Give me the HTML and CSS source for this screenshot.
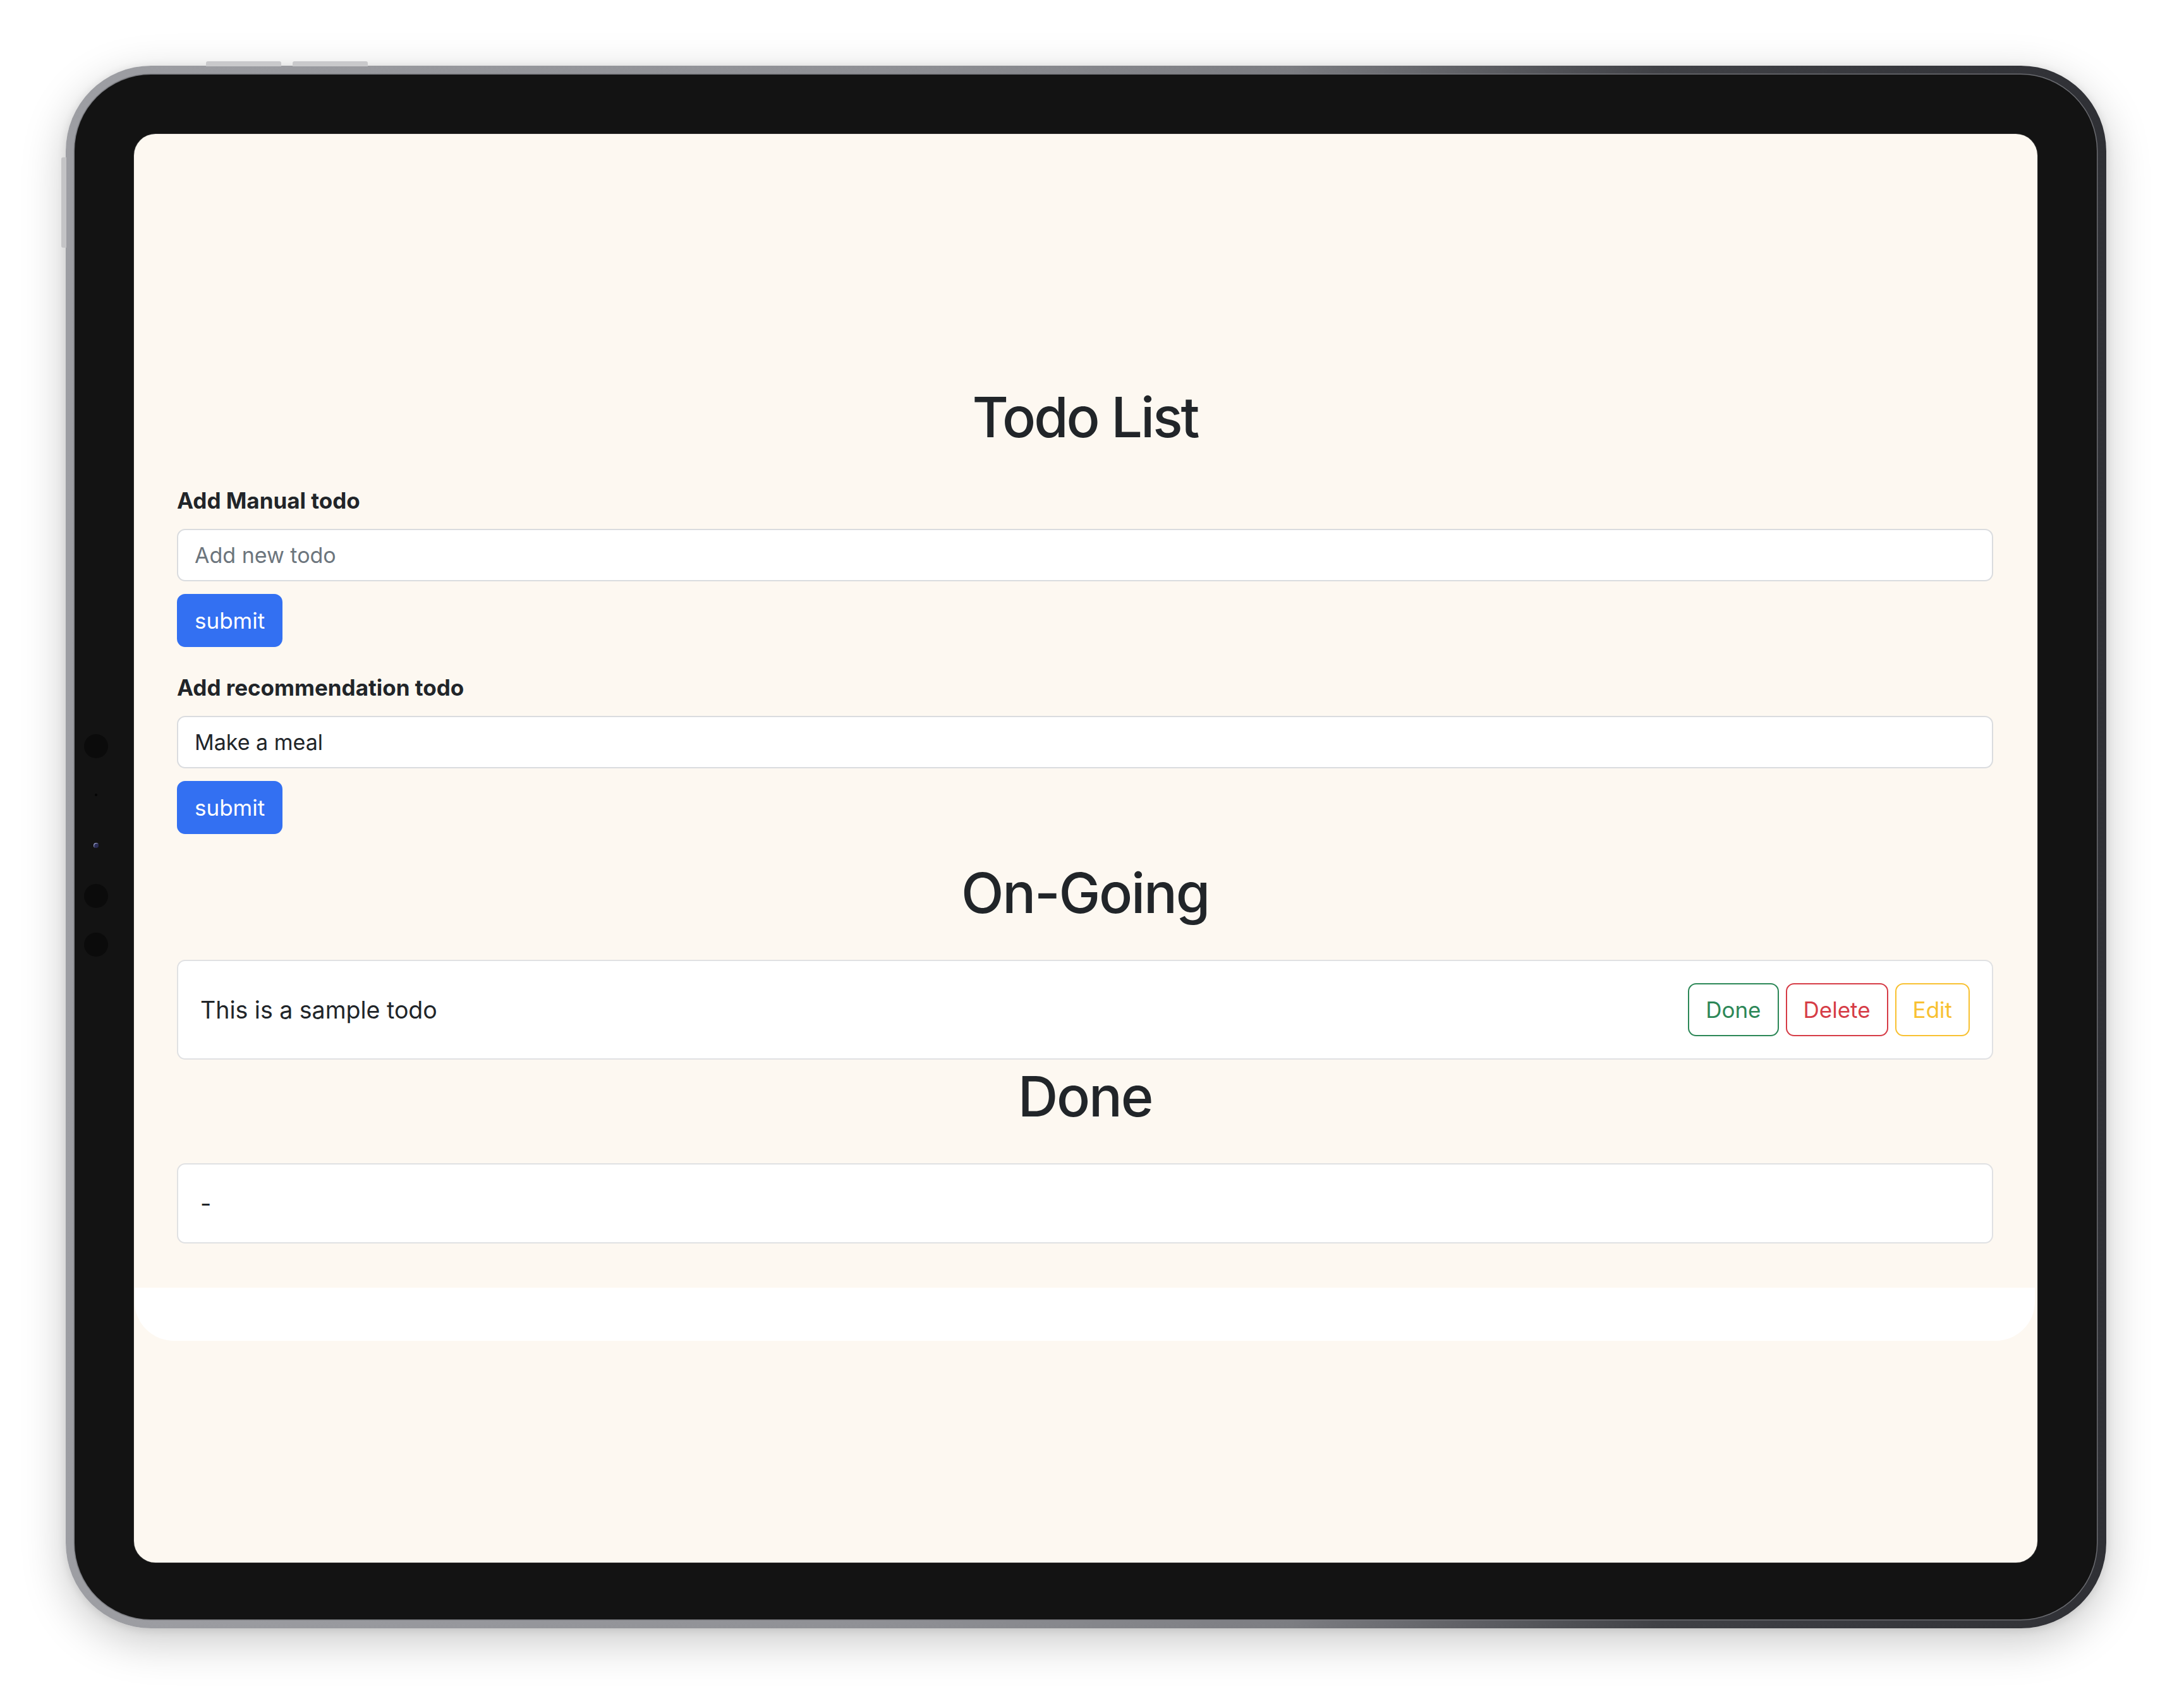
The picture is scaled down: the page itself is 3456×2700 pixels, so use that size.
FILE: index.html
```html
<!DOCTYPE html>
<html lang="en">
<head>
<meta charset="utf-8">
<title>Todo List</title>
<link rel="stylesheet" href="styles.css">
</head>
<body>
<div class="device">
  <span class="top-key key-a"></span>
  <span class="top-key key-b"></span>
  <span class="side-key"></span>
  <div class="bezel">
    <div class="sensors">
      <span class="sensor big"></span>
      <span class="sensor tiny"></span>
      <span class="sensor cam"></span>
      <span class="sensor big"></span>
      <span class="sensor big"></span>
    </div>
    <div class="screen">
      <div class="page">
        <h1 class="title">Todo List</h1>
        <form class="todo-form">
          <label class="form-label" for="manual">Add Manual todo</label>
          <input class="form-control" id="manual" type="text" placeholder="Add new todo">
          <button class="btn-primary" type="button">submit</button>
        </form>
        <form class="todo-form second">
          <label class="form-label" for="reco">Add recommendation todo</label>
          <input class="form-control" id="reco" type="text" value="Make a meal">
          <button class="btn-primary" type="button">submit</button>
        </form>
        <h1 class="section-title ongoing">On-Going</h1>
        <div class="todo-card">
          <span class="todo-text">This is a sample todo</span>
          <div class="actions">
            <button class="btn-outline done" type="button">Done</button>
            <button class="btn-outline delete" type="button">Delete</button>
            <button class="btn-outline edit" type="button">Edit</button>
          </div>
        </div>
        <h1 class="section-title done-title">Done</h1>
        <div class="todo-card empty">
          <span class="todo-text">-</span>
        </div>
      </div>
      <div class="band"></div>
    </div>
  </div>
</div>
</body>
</html>
```

FILE: styles.css
```css
* { box-sizing: border-box; }

html, body {
  margin: 0;
  background: #ffffff;
}

body {
  width: 3456px;
  height: 2700px;
  overflow: hidden;
  padding: 104px 0 0 104px;
  font-family: Inter, "Liberation Sans", sans-serif;
  color: #212529;
}

.device {
  position: relative;
  width: 3229px;
  height: 2473px;
  padding: 14px 15px 14px 14px;
  border-radius: 135px;
  background: linear-gradient(90deg, #9d9ea3 0%, #8f9095 40%, #7c7d82 60%, #404146 78%, #2f3035 100%);
  box-shadow: 0 20px 70px rgba(0, 0, 0, 0.22), 0 2px 14px rgba(0, 0, 0, 0.10);
  display: flex;
}

.top-key {
  position: absolute;
  top: -7px;
  height: 8px;
  width: 119px;
  background: #c9c9cb;
  border-radius: 3px 3px 0 0;
}
.key-a { left: 222px; }
.key-b { left: 359px; }

.side-key {
  position: absolute;
  left: -7px;
  top: 145px;
  width: 8px;
  height: 143px;
  background: #c4c4c6;
  border-radius: 3px 0 0 3px;
}

.bezel {
  position: relative;
  flex: 1;
  display: flex;
  padding: 94px 94px 90px 94px;
  background: #131313;
  border-radius: 121px;
  box-shadow: 0 0 0 1.5px rgba(120, 121, 126, 0.8);
}

.sensors {
  position: absolute;
  left: 15px;
  top: 1044px;
  width: 38px;
  display: flex;
  flex-direction: column;
  align-items: center;
}
.sensor { display: block; border-radius: 50%; }
.sensor.big { width: 38px; height: 38px; background: #0b0b0b; }
.sensor.big:nth-child(4) { margin-top: 57px; }
.sensor.big:nth-child(5) { margin-top: 39px; }
.sensor.tiny { width: 4px; height: 4px; background: #050505; margin-top: 56px; }
.sensor.cam { width: 8px; height: 8px; background: #2b2d55; box-shadow: inset 1px 1px 0 #9aa0c8; margin-top: 74px; }

.screen {
  flex: 1;
  display: flex;
  flex-direction: column;
  background: #fdf8f1;
  border-radius: 34px;
  overflow: hidden;
  box-shadow: 0 0 0 1px #2c2c2c;
}

.page {
  padding: 395px 70px 0 68px;
}

.title,
.section-title {
  margin: 0 0 53px;
  font-size: 88px;
  font-weight: 500;
  line-height: 106px;
  letter-spacing: -2.2px;
  text-align: center;
  color: #212529;
}
.title { letter-spacing: -3px; }

.todo-form {
  display: flex;
  flex-direction: column;
  align-items: flex-start;
}
.todo-form.second { margin-top: 38px; }

.form-label {
  display: block;
  font-size: 35px;
  font-weight: 700;
  line-height: 53px;
  margin-bottom: 18px;
}

.form-control {
  width: 100%;
  height: 83px;
  padding: 0 26px;
  border: 2px solid #dadcdf;
  border-radius: 13px;
  background: #ffffff;
  font-family: inherit;
  font-size: 34px;
  color: #212529;
  outline: none;
}
.form-control::placeholder { color: #6c757d; }

.btn-primary {
  margin-top: 20px;
  height: 84px;
  padding: 0 26px;
  border: 2px solid #3370f2;
  border-radius: 13px;
  background: #3370f2;
  color: #ffffff;
  font-family: inherit;
  font-size: 35px;
  line-height: 1;
}

.section-title.ongoing { margin-top: 40px; }
.section-title.done-title { margin-top: 5px; }

.todo-card {
  display: flex;
  align-items: center;
  justify-content: space-between;
  padding: 35px;
  background: #ffffff;
  border: 2px solid #e0e1e3;
  border-radius: 13px;
}
.todo-card.empty { justify-content: flex-start; }

.todo-text {
  font-size: 37.5px;
  line-height: 53px;
}

.actions {
  display: flex;
  gap: 11px;
}

.btn-outline {
  height: 84px;
  padding: 0 26px;
  border: 2px solid currentColor;
  border-radius: 13px;
  background: transparent;
  font-family: inherit;
  font-size: 35px;
  line-height: 1;
}
.btn-outline.done { color: #2c8757; }
.btn-outline.delete { color: #d63c46; }
.btn-outline.edit { color: #f8c132; }

.band {
  margin: 70px 4px 0 1px;
  height: 84px;
  background: #ffffff;
  border-radius: 0 0 62px 62px;
}
```
